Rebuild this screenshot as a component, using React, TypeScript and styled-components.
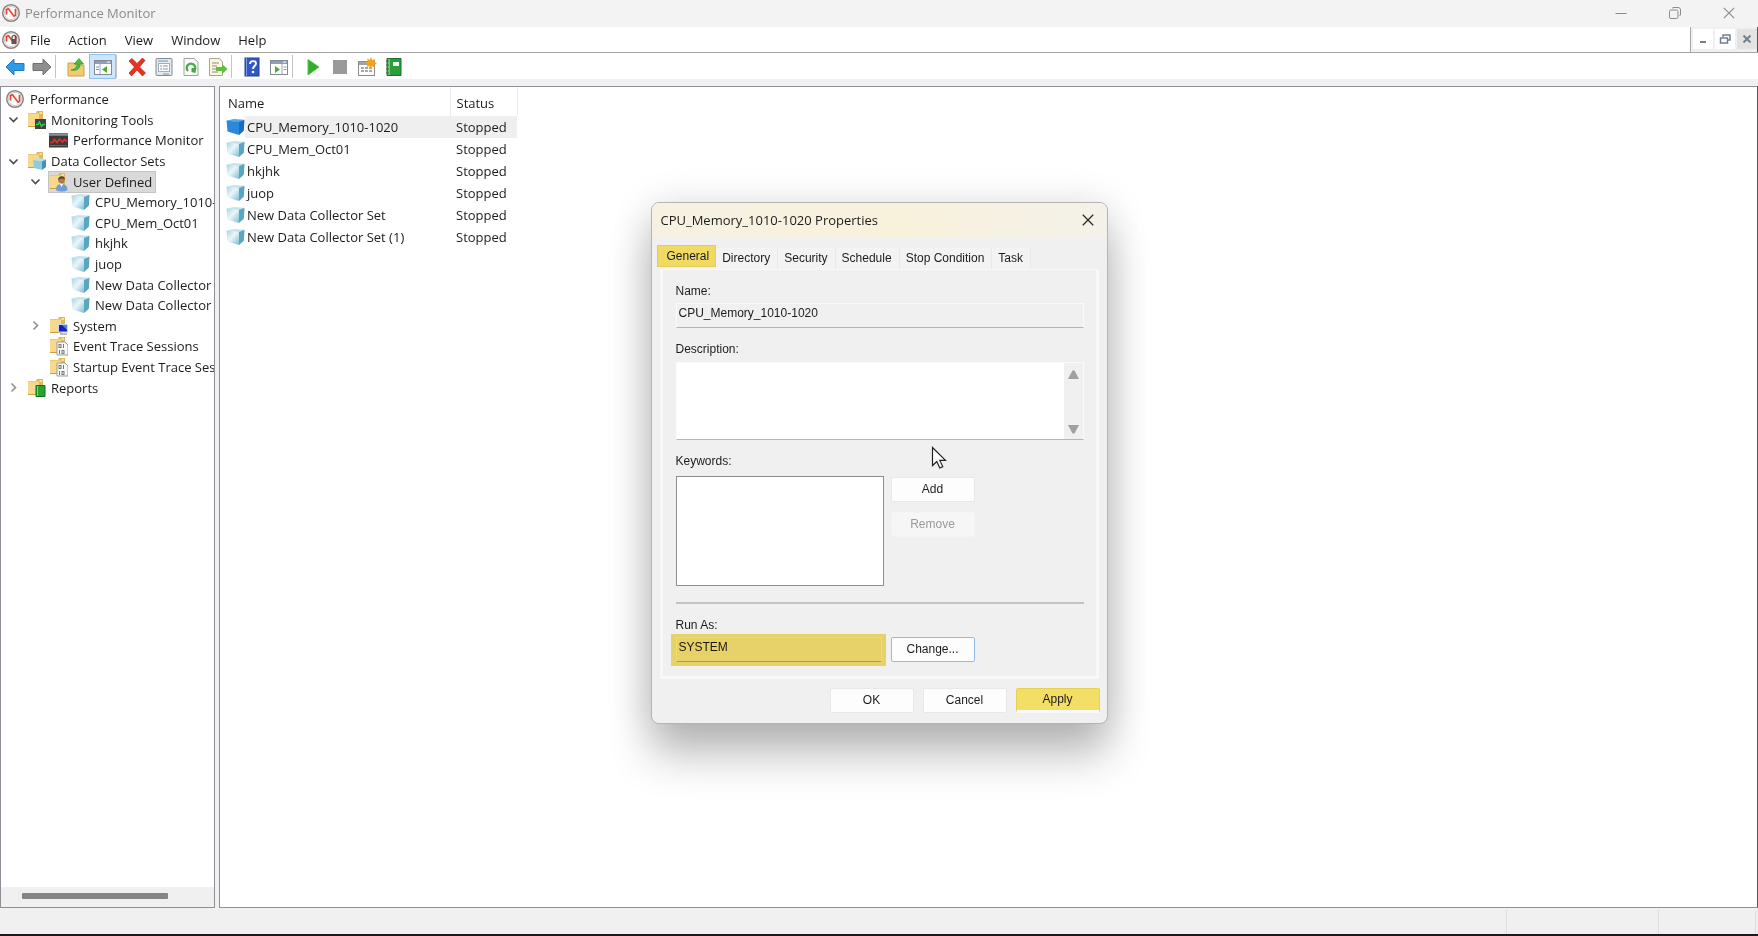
import React from "react";
import styled, { createGlobalStyle, css } from "styled-components";

const GlobalStyle = createGlobalStyle`
  * { box-sizing: border-box; }
  body { margin: 0; background: #f0f0f0; }
  button, input, textarea, select { font: inherit; color: inherit; margin: 0; }
  ul { list-style: none; margin: 0; padding: 0; }
`;

const Window = styled.div`
  position: relative;
  display: flex;
  flex-direction: column;
  min-height: 100vh;
  background: #f0f0f0;
  color: #1c1c1c;
  font: 13px/18px "Open Sans", "Noto Sans", sans-serif;
  border-bottom: 2px solid #1d1b1e;
`;

const TitleBar = styled.header`
  display: flex;
  align-items: center;
  height: 27px;
  padding: 0 2px 1px 1px;
  background: #f3f3f3;
  color: #8b8b8b;
`;

const AppTitle = styled.h1`
  flex: 1;
  margin: 0 0 0 4px;
  font-size: 13px;
  font-weight: 400;
`;

const CaptionButton = styled.button`
  display: grid;
  place-items: center;
  width: 54px;
  height: 26px;
  padding: 0;
  border: 0;
  background: none;
  color: #8a8a8a;
`;

const MenuBar = styled.nav`
  display: flex;
  height: 26px;
  padding-left: 1px;
  background: #fff;
  border-bottom: 1px solid #a6a6a6;
`;

const MenuItems = styled.div`
  display: flex;
  flex: 1;
  align-items: center;
  border-right: 1px solid #a6a6a6;
`;

const MenuItem = styled.button`
  padding: 0 9px;
  border: 0;
  background: none;
  line-height: 24px;
`;

const ChildControls = styled.div`
  display: flex;
  gap: 2px;
  padding: 2px 0 2px 2px;
  background: #f0f0f0;
  border-right: 1px solid #555;
`;

const ChildButton = styled.button<{ $shaded?: boolean }>`
  display: grid;
  place-items: center;
  width: 20px;
  height: 20px;
  padding: 0;
  border: 0;
  background: ${(p) => (p.$shaded ? "#e3e3e3" : "#fff")};
`;

const Toolbar = styled.div`
  display: flex;
  align-items: center;
  height: 26px;
  padding: 1px 0 0 1px;
  background: #fff;
`;

const ToolButton = styled.button<{ $active?: boolean }>`
  display: grid;
  place-items: center;
  width: 27px;
  height: 25px;
  padding: 0;
  border: 1px solid ${(p) => (p.$active ? "#8ec3ee" : "transparent")};
  background: ${(p) => (p.$active ? "#cfe6fa" : "none")};
`;

const ToolDivider = styled.span`
  width: 1px;
  height: 23px;
  margin-right: 6px;
  background: #c4c4c4;
`;

const Workspace = styled.main`
  display: flex;
  flex: 1;
  gap: 4px;
  margin-top: 7px;
`;

const TreePane = styled.aside`
  display: flex;
  flex-direction: column;
  width: 215px;
  border: 1px solid #8f8f98;
  background: #fff;
  overflow: hidden;
`;

const ListPane = styled.section`
  flex: 1;
  border: 1px solid #8f8f98;
  border-right-color: #55555c;
  background: #fff;
`;

const TreeList = styled.ul`
  display: grid;
  grid-template-rows: repeat(15, 1fr);
  height: 309px;
  margin-top: 2px;
`;

const indent = [5, 4, 26, 48];

const TreeItem = styled.li<{ $level: number }>`
  display: flex;
  align-items: center;
  gap: 5px;
  padding-left: ${(p) => indent[p.$level] - 1}px;
  white-space: nowrap;
`;

const Expander = styled.span`
  display: grid;
  flex: none;
  place-items: center;
  width: 18px;
`;

const TreeNode = styled.span<{ $selected?: boolean }>`
  display: flex;
  align-items: center;
  gap: 5px;
  height: 20px;
  padding-right: 3px;
  ${(p) =>
    p.$selected &&
    css`
      background: #d9d9d9;
      outline: 1px solid #c3c3c3;
    `}
`;

const HScroll = styled.div`
  display: flex;
  align-items: center;
  height: 20px;
  margin-top: auto;
  padding: 0 0 2px 21px;
  background: #f0f0f0;
`;

const HScrollThumb = styled.span`
  width: 146px;
  height: 6px;
  border-radius: 1px;
  background: #858585;
`;

const DataTable = styled.table`
  border-collapse: collapse;
  table-layout: fixed;
  width: 297px;
`;

const HeadCell = styled.th<{ $wide?: boolean }>`
  width: ${(p) => (p.$wide ? 230 : 67)}px;
  height: 29px;
  padding: 2px 0 0 ${(p) => (p.$wide ? 8 : 6)}px;
  border-right: 1px solid #ececec;
  text-align: left;
  font-weight: 400;
`;

const Cell = styled.td<{ $selected?: boolean }>`
  height: 22px;
  padding: 0 0 0 6px;
  background: ${(p) => (p.$selected ? "#efefef" : "none")};
`;

const NameCell = styled(Cell)`
  background: ${(p) => (p.$selected ? "linear-gradient(90deg, #fff 25px, #efefef 25px)" : "none")};
`;

const NameContent = styled.span`
  display: flex;
  align-items: center;
  gap: 2px;
`;

const StatusBar = styled.footer`
  display: flex;
  justify-content: flex-end;
  height: 26px;
  padding: 2px 2px 0 0;
`;

const StatusCell = styled.span<{ $wide?: boolean }>`
  width: ${(p) => (p.$wide ? 152 : 98)}px;
  border-left: 1px solid #dedede;
  &:last-child { border-right: 1px solid #dedede; }
`;

/* Properties dialog */

const DialogLayer = styled.div`
  position: absolute;
  inset: 0;
  display: grid;
  place-items: center;
  padding-bottom: 9px;
`;

const Dialog = styled.div`
  position: relative;
  width: 457px;
  border: 1px solid #b4b4b4;
  border-radius: 8px;
  background: #f0f0f0;
  box-shadow: 0 32px 44px rgba(0, 0, 0, 0.24), 0 4px 40px rgba(0, 0, 0, 0.14);
  font: 12px/16px "Liberation Sans", Arial, sans-serif;
`;

const DialogTitle = styled.div`
  display: flex;
  align-items: center;
  justify-content: space-between;
  height: 35px;
  padding: 0 8px 0 9px;
  border-radius: 7px 7px 0 0;
  background: linear-gradient(90deg, #f6f1e2, #f8f1dc 55%, #f4f1e9);
  font: 13px/18px "Open Sans", "Noto Sans", sans-serif;
`;

const CloseButton = styled.button`
  display: grid;
  place-items: center;
  width: 22px;
  height: 22px;
  padding: 0;
  border: 0;
  background: none;
`;

const DialogBody = styled.div`
  padding: 7px 7px 10px 5px;
`;

const Tabs = styled.div`
  display: flex;
  align-items: flex-end;
`;

const Tab = styled.button<{ $active?: boolean }>`
  height: 21px;
  padding: 0 7px 0 6px;
  border: 0;
  border-right: 1px solid #e9e9e9;
  background: #f3f3f3;
  line-height: 20px;
  white-space: nowrap;
  ${(p) =>
    p.$active &&
    css`
      height: 22px;
      margin-bottom: 2px;
      padding: 0 6px 0 9px;
      border: 1px solid #e3cd58;
      background: #efda64;
    `}
`;

const TabPanel = styled.div`
  display: flex;
  flex-direction: column;
  margin: 0 1px 0 3px;
  padding: 13px 12px 14px 13px;
  border: 3px solid #f9f9f9;
  border-top-width: 1px;
`;

const Label = styled.label<{ $gap?: number }>`
  display: block;
  line-height: 16px;
  margin-bottom: ${(p) => p.$gap ?? 4}px;
`;

const fieldEdge = css`
  border: 1px solid #fafafa;
  border-bottom: 1px solid #b5b5b5;
`;

const TextField = styled.input`
  ${fieldEdge}
  display: block;
  width: 100%;
  height: 25px;
  padding: 0 2px 4px;
  background: #f0f0f0;
  outline: none;
`;

const DescriptionBox = styled.div`
  ${fieldEdge}
  display: flex;
  height: 78px;
  background: #fff;
`;

const DescriptionInput = styled.textarea`
  flex: 1;
  border: 0;
  background: #fff;
  resize: none;
  outline: none;
`;

const VScroll = styled.div`
  display: flex;
  flex-direction: column;
  justify-content: space-between;
  align-items: center;
  width: 19px;
  padding: 7px 0 5px;
  background: #f0f0f0;
`;

const FieldBlock = styled.div`
  margin-bottom: 13px;
`;

const Columns = styled.div`
  display: flex;
  gap: 7px;
`;

const KeywordList = styled.select`
  width: 208px;
  height: 110px;
  border: 1px solid #8d8d8d;
  border-radius: 0;
  background: #fff;
  appearance: none;
  outline: none;
`;

const ButtonStack = styled.div`
  display: flex;
  flex-direction: column;
  gap: 10px;
  padding-top: 1px;
`;

const PushButton = styled.button<{ $focused?: boolean }>`
  width: 84px;
  height: 25px;
  padding: 0;
  border: 1px solid ${(p) => (p.$focused ? "#8fbce6" : "#e8e8e8")};
  border-radius: 2px;
  background: #fdfdfd;
  &:disabled {
    background: #f6f6f6;
    border-color: #f4f4f4;
    color: #9a9a9a;
  }
`;

const Separator = styled.hr`
  width: 100%;
  height: 2px;
  margin: 16px 0 13px;
  border: 0;
  background: #c3c3c3;
`;

const Highlight = styled.div`
  position: relative;
  width: 208px;
  padding-right: 2px;
  &::after {
    content: "";
    position: absolute;
    inset: -3px -2px -4px -5px;
    background: #f6e071;
    mix-blend-mode: multiply;
    pointer-events: none;
  }
`;

const DialogActions = styled.div`
  display: flex;
  justify-content: flex-end;
  gap: 9px;
  margin-top: 9px;
`;

const ApplyButton = styled(PushButton)`
  border-color: #e6d05a;
  border-bottom: 3px solid #fafafa;
  background: #f3de66;
  background-clip: padding-box;
`;

const PointerArt = styled.svg`
  position: absolute;
  left: 279px;
  top: 243px;
`;

/* Icons */

const Gauge = ({ lock }: { lock?: boolean }) => (
  <svg width="20" height="20" viewBox="0 0 20 20" aria-hidden="true">
    <circle cx="10" cy="10" r="8.300" fill="#fbfbfb" stroke="#8b8580" strokeWidth="1.500" />
    <circle cx="10" cy="10" r="6.600" fill="none" stroke="#c4c0bc" strokeWidth="0.8" />
    <path d="M5.500 11.500V6.500l2-.8 5.500 7.500 1.500-1V6" fill="none" stroke="#e4473a" strokeWidth="1.700" />
    {lock && (
      <g>
        <path d="M11 9V7.500a2 2 0 0 1 4 0V9" fill="none" stroke="#444" strokeWidth="1.200" />
        <rect x="10.500" y="9" width="5" height="5" fill="#6c504a" />
      </g>
    )}
  </svg>
);

const Cube = ({ selected }: { selected?: boolean }) => (
  <svg width="19" height="18" viewBox="0 0 19 18" aria-hidden="true">
    <defs>
      <linearGradient id="cube-front" x1="0" y1="0" x2="1" y2="1">
        <stop offset="0" stopColor="#a6d3e4" />
        <stop offset=".45" stopColor="#eaf6fa" />
        <stop offset="1" stopColor="#7dbdd6" />
      </linearGradient>
    </defs>
    <path d="M.5 2.500 8 1l10.500.8-5.500 2.700z" fill={selected ? "#55a8e8" : "#c6e3ec"} />
    <path d="M.5 2.500 13 4v13L1.500 13.500z" fill={selected ? "#2d88dc" : "url(#cube-front)"} />
    <path d="m13 4 5.500-2.200-.7 11L13 17z" fill={selected ? "#1a6cc0" : "#5aa5c0"} />
  </svg>
);

const FolderBase = ({ children }: { children?: React.ReactNode }) => (
  <svg width="19" height="20" viewBox="0 0 19 20" aria-hidden="true">
    <path d="M1 3h8l1-2h6v15H1z" fill="#e2b758" />
    <path d="M1 3.500h11V17H1z" fill="#f6d98c" />
    <path d="M1 16.500h12" stroke="#d0a040" />
    <path d="M12.500 3h2.500" stroke="#fff3cf" strokeWidth="1.400" />
    {children}
  </svg>
);

const FolderScreen = () => (
  <FolderBase>
    <rect x="8" y="9" width="11" height="10" fill="#3c4444" />
    <path d="M9 14.500h2l1.500-2.500 2 4.500 1.500-2h2" fill="none" stroke="#3fd04a" strokeWidth="1.300" />
  </FolderBase>
);
const FolderCube = () => (
  <FolderBase>
    <path d="m6 9 6-2 7 1.500-3 2z" fill="#b5e0ee" />
    <path d="m6 9 9 1.500V19l-8-2z" fill="#8ccbe2" />
    <path d="m15 10.500 4-2V16l-4 3z" fill="#3f93b4" />
  </FolderBase>
);
const FolderUser = () => (
  <FolderBase>
    <path d="M7 18c0-4 2-6 5.500-6s6 2 6 6c-3 2-8.500 2-11.500 0z" fill="#6d9fd6" />
    <circle cx="12.500" cy="8" r="3.300" fill="#b07a48" />
    <path d="M9 8c0-5 7-5 7-.5-2-1.500-4-1.500-7 .5z" fill="#59452f" />
    <path d="m11 12 1.500 3 1.500-3z" fill="#fff" />
  </FolderBase>
);
const FolderMonitor = () => (
  <FolderBase>
    <rect x="9" y="8" width="10" height="8.500" fill="#cdd5f2" />
    <rect x="10" y="9" width="8" height="6.500" fill="#1422b8" />
    <path d="m13 9 5 0v5z" fill="#5b7bea" />
    <path d="M11 18h7" stroke="#a5abc0" strokeWidth="1.600" />
  </FolderBase>
);
const FolderBinary = () => (
  <FolderBase>
    <path d="M8 6h8l3 3v10H8z" fill="#f8f8f8" stroke="#9b9b9b" />
    <rect x="10" y="8.500" width="2" height="3" fill="none" stroke="#777" />
    <path d="M14.500 8v4M10.500 14v4" stroke="#777" />
    <rect x="13" y="14.500" width="2" height="3" fill="none" stroke="#777" />
  </FolderBase>
);
const FolderReport = () => (
  <FolderBase>
    <path d="M9 7.500h9v11H9z" fill="#27a42e" stroke="#156b1c" />
    <path d="M10.500 8v10" stroke="#7ddc74" />
  </FolderBase>
);

const ScreenIcon = () => (
  <svg width="19" height="16" viewBox="0 0 19 16" aria-hidden="true">
    <rect x="0" y="1" width="19" height="14.500" fill="#3b3a3e" />
    <path d="M0 2.500h19" stroke="#8a9097" strokeWidth="2.500" />
    <path d="M1 10.500h2.500l2-3 2.500 3 2.500-3.500 3 3 2-2.500 2.500 2" fill="none" stroke="#d8342c" strokeWidth="1.700" />
    <path d="M1 13.500h17" stroke="#666" />
  </svg>
);

const Chevron = ({ open }: { open?: boolean }) => (
  <svg width="11" height="11" viewBox="0 0 11 11" fill="none" strokeWidth="1.600" aria-hidden="true">
    {open ? <path d="m1.500 3.500 4 4 4-4" stroke="#4a4a4a" /> : <path d="m3.500 1.500 4 4-4 4" stroke="#909090" />}
  </svg>
);

const Svg = ({ children, size = 20 }: { children: React.ReactNode; size?: number }) => (
  <svg width={size} height={size} viewBox={`0 0 ${size} ${size}`} aria-hidden="true">{children}</svg>
);

const Arrow = ({ forward }: { forward?: boolean }) => (
  <Svg>
    <path
      d={forward ? "M19 10l-8-8v4.500H1v7h10V18z" : "M1 10l8-8v4.500h10v7H9V18z"}
      fill={forward ? "#8f8f8f" : "#2e9be6"}
      stroke={forward ? "#717171" : "#1d7cc4"}
    />
  </Svg>
);
const UpFolder = () => (
  <Svg>
    <path d="M2 6h6l2 2h8v11H2z" fill="#f0cb72" stroke="#cfa04a" />
    <path d="M5 13c5-1 6-3 6-6H8l5-5.500L17.500 7H14c0 5-3 7-9 6z" fill="#4cbb3c" stroke="#2f8f2a" strokeWidth=".7" />
  </Svg>
);
const PaneIcon = ({ flip }: { flip?: boolean }) => (
  <Svg>
    <rect x="1.500" y="3.500" width="17" height="14" fill="#fff" stroke="#818994" />
    <path d="M2 5.500h16" stroke="#8fa0b5" strokeWidth="3" />
    <path d="M14 5h3" stroke="#fff" />
    <path d={flip ? "M13 7v10" : "M7 7v10"} stroke="#9aa5b1" />
    <path d={flip ? "M14.500 10h3M14.500 12.500h3" : "M3 10h3M3 12.500h3"} stroke="#6f9bd0" />
    <path d={flip ? "m6 9 5 3.500-5 3.500z" : "m14 9-5 3.500 5 3.500z"} fill="#47ad33" />
  </Svg>
);
const DeleteIcon = () => (
  <Svg><path d="m2 4 3-2.500 5 5L15.500 1 18 3.500 12.500 10l6 6-3 3L10 13l-5.500 6L2 16l5.500-6z" fill="#e5331f" stroke="#b92416" strokeWidth=".7" /></Svg>
);
const PropsIcon = () => (
  <Svg>
    <rect x="2" y="1.500" width="16" height="17" rx="1" fill="#e4e9ed" stroke="#7f8b95" />
    <rect x="4.500" y="6.500" width="11" height="8" fill="#fff" stroke="#9eb0bf" />
    <path d="M4 4h10M6 9h2M9 9h5M6 12h2M9 12h5M9 17h6" stroke="#7895ae" />
  </Svg>
);
const RefreshIcon = () => (
  <Svg>
    <path d="M3 1.500h10L17 5v13.500H3z" fill="#fafafa" stroke="#a2a2a2" />
    <path d="M7 14a4.300 4.300 0 1 1 6 0" fill="none" stroke="#43ab43" strokeWidth="2.200" />
    <path d="m10.500 11 4.500 0-.5 5-4-1z" fill="#43ab43" />
  </Svg>
);
const ExportIcon = () => (
  <Svg>
    <path d="M1.500 1.500h10L14.500 5v13.500h-13z" fill="#fdf6dc" stroke="#a9a595" />
    <path d="M4 6h7M4 9h5M4 12h4M4 15h6" stroke="#8d8d8d" />
    <path d="M8 10h6V7l5.500 5-5.500 5v-3H8z" fill="#5cc03e" />
  </Svg>
);
const HelpIcon = () => (
  <Svg>
    <rect x="3" y="1" width="14" height="18" fill="#3157c4" stroke="#223f96" />
    <path d="M4.500 1v18" stroke="#7c9af0" />
    <path d="M8 7c0-4 6-3.500 6-.5 0 2.500-3 2.500-3 5.500" fill="none" stroke="#fff" strokeWidth="1.900" />
    <circle cx="11" cy="15" r="1.300" fill="#fff" />
  </Svg>
);
const PlayIcon = () => (
  <Svg><path d="M5 2.500 16 10 5 18z" fill="#33ad2c" stroke="#52c548" /></Svg>
);
const StopIcon = () => (
  <Svg><rect x="3" y="3" width="14" height="14" fill="#9a9a9a" /></Svg>
);
const NewSetIcon = () => (
  <Svg>
    <rect x="1.500" y="4.500" width="16" height="14" fill="#fcfcfc" stroke="#8d8d8d" />
    <path d="M2 6.500h12" stroke="#98a4b4" strokeWidth="3" />
    <path d="M4 11h3M8 11h3M12 11h3M4 14h3M8 14h3M12 14h3" stroke="#8d8d8d" strokeWidth="1.500" />
    <path d="m14 0 1.300 3 3-1-1 3L20 6.500l-3 1 1 3-3-1.200L13.500 12l-1-3-3 1 1.200-3L8 5.500l3-1-1-3 3 1.300z" fill="#f7a21b" />
  </Svg>
);
const BookIcon = () => (
  <Svg>
    <path d="M3 1.500h14v17H3z" fill="#2b9e3c" stroke="#197028" />
    <path d="M5 2v16" stroke="#8fd68a" strokeWidth="1.500" />
    <rect x="9" y="5" width="6" height="4" fill="#eef8ec" />
    <path d="M2 4h3M2 8h3M2 12h3M2 16h3" stroke="#55605a" />
  </Svg>
);

const CrossIcon = ({ size, color, width }: { size: number; color: string; width: number }) => (
  <svg width={size} height={size} viewBox="0 0 12 12" aria-hidden="true">
    <path d="m.8.8 10.400 10.400M11.200.8.8 11.200" stroke={color} strokeWidth={width} />
  </svg>
);

const Triangle = ({ down }: { down?: boolean }) => (
  <svg width="11" height="9" viewBox="0 0 11 9" aria-hidden="true">
    <path d={down ? "M0 0h11L6.500 8.500h-2z" : "M0 9h11L6.500.5h-2z"} fill="#a0a0a0" />
  </svg>
);

/* Data */

type Node = { label: string; level: number; icon: React.ReactNode; state?: "open" | "closed"; selected?: boolean };

const sets = ["CPU_Memory_1010-1020", "CPU_Mem_Oct01", "hkjhk", "juop", "New Data Collector Set", "New Data Collector Set (1)"];

const tree: Node[] = [
  { label: "Performance", level: 0, icon: <Gauge /> },
  { label: "Monitoring Tools", level: 1, icon: <FolderScreen />, state: "open" },
  { label: "Performance Monitor", level: 2, icon: <ScreenIcon /> },
  { label: "Data Collector Sets", level: 1, icon: <FolderCube />, state: "open" },
  { label: "User Defined", level: 2, icon: <FolderUser />, state: "open", selected: true },
  ...sets.map((label) => ({ label, level: 3, icon: <Cube /> })),
  { label: "System", level: 2, icon: <FolderMonitor />, state: "closed" },
  { label: "Event Trace Sessions", level: 2, icon: <FolderBinary /> },
  { label: "Startup Event Trace Sessions", level: 2, icon: <FolderBinary /> },
  { label: "Reports", level: 1, icon: <FolderReport />, state: "closed" },
];

type Tool = { name: string; icon: React.ReactNode; active?: boolean };

const toolGroups: Tool[][] = [
  [{ name: "Back", icon: <Arrow /> }, { name: "Forward", icon: <Arrow forward /> }],
  [{ name: "Up one level", icon: <UpFolder /> }, { name: "Show console tree", icon: <PaneIcon />, active: true }],
  [
    { name: "Delete", icon: <DeleteIcon /> },
    { name: "Properties", icon: <PropsIcon /> },
    { name: "Refresh", icon: <RefreshIcon /> },
    { name: "Export list", icon: <ExportIcon /> },
  ],
  [{ name: "Help", icon: <HelpIcon /> }, { name: "Show action pane", icon: <PaneIcon flip /> }],
  [
    { name: "Start", icon: <PlayIcon /> },
    { name: "Stop", icon: <StopIcon /> },
    { name: "New data collector", icon: <NewSetIcon /> },
    { name: "Latest report", icon: <BookIcon /> },
  ],
];

const PropertiesDialog = () => (
  <DialogLayer>
    <Dialog role="dialog" aria-labelledby="dialog-title">
      <DialogTitle>
        <span id="dialog-title">CPU_Memory_1010-1020 Properties</span>
        <CloseButton aria-label="Close dialog"><CrossIcon size={12} color="#2a2a2a" width={1.3} /></CloseButton>
      </DialogTitle>
      <DialogBody>
        <Tabs role="tablist">
          {["General", "Directory", "Security", "Schedule", "Stop Condition", "Task"].map((name, i) => (
            <Tab key={name} role="tab" aria-selected={i === 0} $active={i === 0}>{name}</Tab>
          ))}
        </Tabs>
        <TabPanel role="tabpanel">
          <FieldBlock>
            <Label htmlFor="set-name">Name:</Label>
            <TextField id="set-name" readOnly value="CPU_Memory_1010-1020" />
          </FieldBlock>
          <FieldBlock>
            <Label htmlFor="description" $gap={5}>Description:</Label>
            <DescriptionBox>
              <DescriptionInput id="description" />
              <VScroll><Triangle /><Triangle down /></VScroll>
            </DescriptionBox>
          </FieldBlock>
          <Label htmlFor="keywords" $gap={7}>Keywords:</Label>
          <Columns>
            <KeywordList id="keywords" size={6} />
            <ButtonStack>
              <PushButton>Add</PushButton>
              <PushButton disabled>Remove</PushButton>
            </ButtonStack>
          </Columns>
          <Separator />
          <Label htmlFor="run-as">Run As:</Label>
          <Columns>
            <Highlight><TextField id="run-as" readOnly value="SYSTEM" /></Highlight>
            <PushButton $focused>Change...</PushButton>
          </Columns>
        </TabPanel>
        <DialogActions>
          <PushButton>OK</PushButton>
          <PushButton>Cancel</PushButton>
          <ApplyButton>Apply</ApplyButton>
        </DialogActions>
      </DialogBody>
      <PointerArt width="16" height="24" viewBox="0 0 16 24" aria-hidden="true">
        <path d="M1.500 1.500v18l4.300-4 3 6.500 3-1.400-3-6.200h5.700z" fill="#fff" stroke="#222" strokeWidth="1.200" />
      </PointerArt>
    </Dialog>
  </DialogLayer>
);

export default function App() {
  return (
    <Window>
      <GlobalStyle />
      <TitleBar>
        <Gauge />
        <AppTitle>Performance Monitor</AppTitle>
        <CaptionButton aria-label="Minimize">
          <svg width="12" height="12" viewBox="0 0 12 12"><path d="M.5 6.500h11" stroke="currentColor" /></svg>
        </CaptionButton>
        <CaptionButton aria-label="Restore">
          <svg width="12" height="12" viewBox="0 0 12 12" fill="none" stroke="currentColor">
            <rect x=".5" y="3" width="8.500" height="8.500" rx="1.500" />
            <path d="M3 1.500c.5-.7 1-1 2-1h4c1.500 0 2.500 1 2.500 2.500v4c0 1-.3 1.500-1 2" />
          </svg>
        </CaptionButton>
        <CaptionButton aria-label="Close"><CrossIcon size={12} color="#8a8a8a" width={1.1} /></CaptionButton>
      </TitleBar>
      <MenuBar>
        <MenuItems>
          <Gauge lock />
          {["File", "Action", "View", "Window", "Help"].map((name) => <MenuItem key={name}>{name}</MenuItem>)}
        </MenuItems>
        <ChildControls>
          <ChildButton aria-label="Minimize console"><Svg size={12}><path d="M3 9h6" stroke="#71808f" strokeWidth="2" /></Svg></ChildButton>
          <ChildButton aria-label="Restore console">
            <Svg size={12}>
              <path d="M4 4V2h7v5H9" fill="none" stroke="#71808f" strokeWidth="1.500" />
              <rect x="1.500" y="5" width="7" height="5" fill="none" stroke="#71808f" strokeWidth="1.500" />
            </Svg>
          </ChildButton>
          <ChildButton aria-label="Close console" $shaded><CrossIcon size={8} color="#71808f" width={3} /></ChildButton>
        </ChildControls>
      </MenuBar>
      <Toolbar role="toolbar">
        {toolGroups.map((group, i) => (
          <React.Fragment key={i}>
            {i > 0 && <ToolDivider />}
            {group.map((tool) => (
              <ToolButton key={tool.name} aria-label={tool.name} $active={tool.active}>{tool.icon}</ToolButton>
            ))}
          </React.Fragment>
        ))}
      </Toolbar>
      <Workspace>
        <TreePane>
          <TreeList role="tree">
            {tree.map((node) => (
              <TreeItem key={node.label} role="treeitem" $level={node.level} aria-selected={!!node.selected}>
                {node.level > 0 && <Expander>{node.state && <Chevron open={node.state === "open"} />}</Expander>}
                <TreeNode $selected={node.selected}>{node.icon}{node.label}</TreeNode>
              </TreeItem>
            ))}
          </TreeList>
          <HScroll><HScrollThumb /></HScroll>
        </TreePane>
        <ListPane>
          <DataTable>
            <thead>
              <tr><HeadCell $wide>Name</HeadCell><HeadCell>Status</HeadCell></tr>
            </thead>
            <tbody>
              {sets.map((name, i) => (
                <tr key={name}>
                  <NameCell $selected={i === 0}><NameContent><Cube selected={i === 0} />{name}</NameContent></NameCell>
                  <Cell $selected={i === 0}>Stopped</Cell>
                </tr>
              ))}
            </tbody>
          </DataTable>
        </ListPane>
      </Workspace>
      <StatusBar><StatusCell $wide /><StatusCell /></StatusBar>
      <PropertiesDialog />
    </Window>
  );
}
